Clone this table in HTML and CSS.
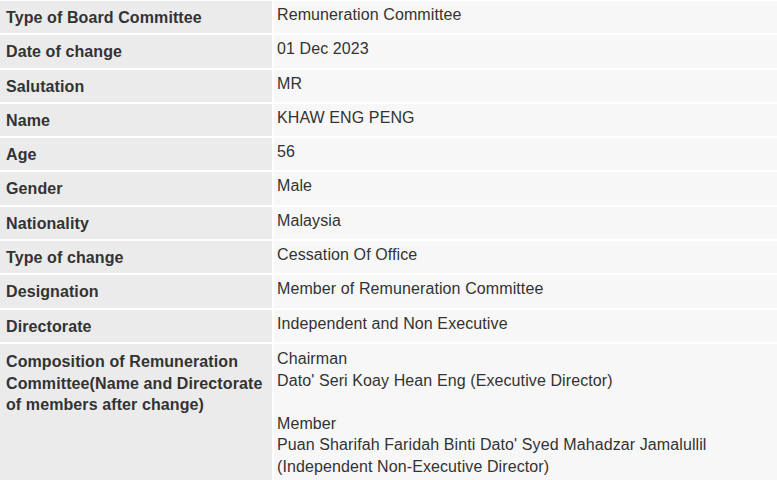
FILE: index.html
```html
<!DOCTYPE html>
<html>
<head>
<meta charset="utf-8">
<link rel="stylesheet" href="styles.css">
</head>
<body>
<div class="details">
  <div class="label">Type of Board Committee</div><div class="value">Remuneration Committee</div>
  <div class="label">Date of change</div><div class="value">01 Dec 2023</div>
  <div class="label">Salutation</div><div class="value">MR</div>
  <div class="label">Name</div><div class="value">KHAW ENG PENG</div>
  <div class="label">Age</div><div class="value">56</div>
  <div class="label">Gender</div><div class="value">Male</div>
  <div class="label">Nationality</div><div class="value">Malaysia</div>
  <div class="label">Type of change</div><div class="value">Cessation Of Office</div>
  <div class="label">Designation</div><div class="value">Member of Remuneration Committee</div>
  <div class="label">Directorate</div><div class="value">Independent and Non Executive</div>
  <div class="label tall">Composition of Remuneration Committee(Name and Directorate of members after change)</div><div class="value tall">Chairman<br>Dato' Seri Koay Hean Eng (Executive Director)<br><br>Member<br>Puan Sharifah Faridah Binti Dato' Syed Mahadzar Jamalullil<br>(Independent Non-Executive Director)</div>
</div>
</body>
</html>
```

FILE: styles.css
```css
html, body {
  margin: 0;
  padding: 0;
  background: #ffffff;
  overflow: hidden;
}
body {
  font-family: "Liberation Sans", Arial, sans-serif;
  font-size: 16px;
  line-height: 21.6px;
  color: #333333;
  letter-spacing: 0.1px;
}
.details {
  display: grid;
  grid-template-columns: 272px 1fr;
  grid-template-rows: repeat(10, 32.3px) 136px;
  gap: 2px;
  padding-top: 1px;
  height: 480px;
  box-sizing: border-box;
}
.label {
  background: #ebebeb;
  font-weight: bold;
  padding: 6px 2px 0 6px;
  box-sizing: border-box;
}
.value {
  background: #f7f7f7;
  padding: 3px 4px 0 3px;
  box-sizing: border-box;
}
.label.tall {
  padding-top: 7px;
}
.value.tall {
  padding-top: 4px;
}
```
